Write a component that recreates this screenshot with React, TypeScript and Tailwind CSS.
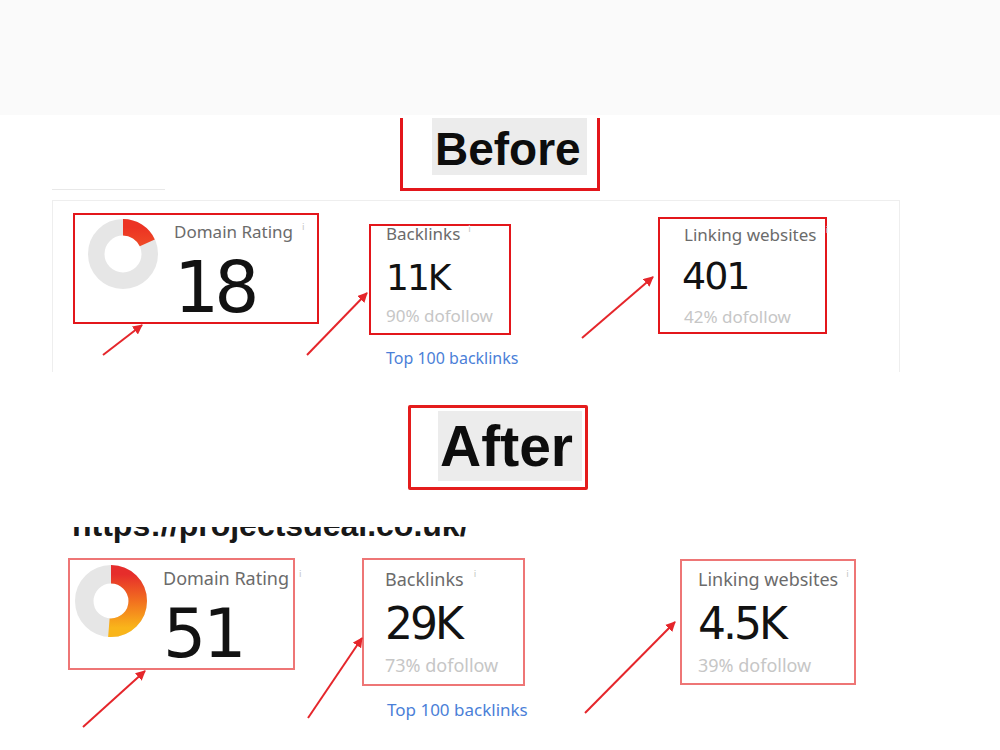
import React from "react";

type Stop = { offset: string; color: string };

interface DonutProps {
  id: string;
  pct: number;
  size: number;
  thickness: number;
  stops: Stop[];
  className?: string;
}

// Ring chart: grey track with a coloured arc starting at 12 o'clock.
// The arc is rotated -90deg, so the gradient runs along local x to read top -> bottom on screen.
const Donut: React.FC<DonutProps> = ({ id, pct, size, thickness, stops, className }) => {
  const r = (size - thickness) / 2;
  const c = 2 * Math.PI * r;
  const mid = size / 2;
  return (
    <svg width={size} height={size} viewBox={`0 0 ${size} ${size}`} className={className}>
      <defs>
        <linearGradient id={id} x1="1" y1="0" x2="0" y2="0">
          {stops.map((s) => (
            <stop key={s.offset} offset={s.offset} stopColor={s.color} />
          ))}
        </linearGradient>
      </defs>
      <circle cx={mid} cy={mid} r={r} fill="none" stroke="#e6e6e6" strokeWidth={thickness} />
      <circle
        cx={mid}
        cy={mid}
        r={r}
        fill="none"
        stroke={`url(#${id})`}
        strokeWidth={thickness}
        strokeDasharray={`${c * pct} ${c}`}
        transform={`rotate(-90 ${mid} ${mid})`}
      />
    </svg>
  );
};

const Info = ({ className = "" }: { className?: string }) => (
  <span className={`font-['DejaVu_Sans',sans-serif] text-[9px] leading-none text-[#c4c4c4] ${className}`}>
    i
  </span>
);

const arrows: [number, number, number, number][] = [
  [103, 355, 142, 325],
  [307, 355, 367, 293],
  [582, 338, 653, 277],
  [83, 727, 145, 671],
  [308, 718, 362, 638],
  [585, 713, 675, 622],
];

const label = "font-['Noto_Sans',sans-serif] leading-[20px] text-[#6b6b6b]";
const sub = "font-['Noto_Sans',sans-serif] leading-[20px] text-[#c6c6c6]";
const big = "font-['DejaVu_Sans',sans-serif] leading-none text-[#121212]";
const link = "whitespace-nowrap font-['Noto_Sans',sans-serif] text-[16px] leading-[20px] text-[#4b7fd8]";

export default function App() {
  return (
    <div className="relative h-[750px] w-[1000px] overflow-hidden bg-white">
      <div className="h-[115px] bg-[#fafafa]" />

      {/* Before heading */}
      <div className="relative h-[73px]">
        <div className="ml-[400px] h-[73px] w-[200px] border-x-[3px] border-b-[3px] border-[#e3161b] pl-[29px]">
          <div className="mt-[3px] h-[57px] w-[155px] bg-[#ececec] pl-[3px] pt-[8px]">
            <span className="block font-['Liberation_Sans',Arial,sans-serif] text-[46px] font-bold leading-none text-[#0d0d0d]">
              Before
            </span>
          </div>
        </div>
        <div className="absolute bottom-[1px] left-[52px] h-px w-[113px] bg-[#e8e8e8]" />
      </div>

      {/* Before stats */}
      <div className="ml-[52px] mt-[9px] h-[172px] w-[848px] border border-b-0 border-[#eeeeee]">
        <div className="flex items-start pl-[20px] pt-[12px]">
          <div className="flex h-[111px] w-[246px] shrink-0 items-start border-2 border-[#e3161b] pl-[13px]">
            <Donut
              id="dr-before"
              pct={0.18}
              size={70}
              thickness={16.5}
              className="mt-[4px] shrink-0"
              stops={[
                { offset: "0", color: "#ec3323" },
                { offset: "1", color: "#f4762e" },
              ]}
            />
            <div className="ml-[16px] mt-[7px]">
              <div className={`flex items-start whitespace-nowrap text-[17px] ${label}`}>
                Domain Rating
                <Info className="ml-[9px] mt-[1px]" />
              </div>
              <div className={`mt-[10px] text-[71px] tracking-[-5px] ${big}`}>18</div>
            </div>
          </div>

          <div className="ml-[50px] mt-[11px] flex w-[142px] shrink-0 flex-col">
            <div className="h-[111px] w-[142px] border-2 border-[#e3161b] pl-[15px]">
              <div className={`-mt-[2px] flex items-start text-[17px] ${label}`}>
                Backlinks
                <Info className="ml-[8px] mt-[1px]" />
              </div>
              <div className={`mt-[16px] text-[36px] tracking-[-2px] ${big}`}>11K</div>
              <div className={`mt-[10px] text-[17px] ${sub}`}>90% dofollow</div>
            </div>
            <div className={`mt-[13px] pl-[17px] ${link}`}>Top 100 backlinks</div>
          </div>

          <div className="ml-[147px] mt-[4px] h-[117px] w-[169px] shrink-0 border-2 border-[#e3161b] pl-[24px]">
            <div className={`mt-[6px] flex items-start whitespace-nowrap text-[17px] ${label}`}>
              Linking websites
              <Info className="ml-[9px] mt-[1px]" />
            </div>
            <div className={`mt-[12px] -ml-[2px] text-[38px] tracking-[-2px] ${big}`}>401</div>
            <div className={`mt-[12px] text-[17px] ${sub}`}>42% dofollow</div>
          </div>
        </div>
      </div>

      {/* After heading */}
      <div className="ml-[408px] mt-[33px] h-[85px] w-[180px] rounded-[2px] border-[3px] border-[#e41c1c] pl-[27px] pt-[3px]">
        <div className="h-[70px] w-[144px] bg-[#ececec] pl-[2px] pt-[7px]">
          <span className="block font-['Liberation_Sans',Arial,sans-serif] text-[57px] font-bold leading-none text-[#0d0d0d]">
            After
          </span>
        </div>
      </div>

      {/* site url, cut off at the top */}
      <div className="mt-[37px] h-[22px] overflow-hidden pl-[72px]">
        <div className="-mt-[18px] whitespace-nowrap font-['Liberation_Sans',Arial,sans-serif] text-[32px] font-bold leading-none text-[#181818]">
          https://projectsdeal.co.uk/
        </div>
      </div>

      {/* After stats */}
      <div className="flex items-start pl-[68px]">
        <div className="mt-[9px] flex h-[112px] w-[227px] shrink-0 items-start border-2 border-[#ee7676]">
          <Donut
            id="dr-after"
            pct={0.51}
            size={72}
            thickness={18.5}
            className="ml-[5px] mt-[5px] shrink-0"
            stops={[
              { offset: "0", color: "#e62d2b" },
              { offset: "0.5", color: "#f2701f" },
              { offset: "1", color: "#f9b51a" },
            ]}
          />
          <div className="ml-[16px] mt-[8px]">
            <div className={`flex items-start whitespace-nowrap text-[18px] ${label}`}>
              Domain Rating
              <Info className="ml-[10px] mt-[2px]" />
            </div>
            <div className={`mt-[12px] text-[68px] tracking-[-3px] ${big}`}>51</div>
          </div>
        </div>

        <div className="ml-[67px] mt-[9px] flex w-[163px] shrink-0 flex-col">
          <div className="h-[128px] w-[163px] border-2 border-[#ee7676] pl-[21px]">
            <div className={`mt-[9px] flex items-start text-[18px] ${label}`}>
              Backlinks
              <Info className="ml-[10px] mt-[1px]" />
            </div>
            <div className={`mt-[13px] text-[44px] tracking-[-3px] ${big}`}>29K</div>
            <div className={`mt-[9px] text-[18px] ${sub}`}>73% dofollow</div>
          </div>
          <div className={`mt-[14px] pl-[25px] text-[17px] ${link}`}>Top 100 backlinks</div>
        </div>

        <div className="ml-[155px] mt-[10px] h-[126px] w-[176px] shrink-0 border-2 border-[#ee7676] pl-[16px]">
          <div className={`mt-[8px] flex items-start whitespace-nowrap text-[18px] ${label}`}>
            Linking websites
            <Info className="ml-[8px] mt-[1px]" />
          </div>
          <div className={`mt-[13px] text-[44px] tracking-[-3px] ${big}`}>4.5K</div>
          <div className={`mt-[9px] text-[18px] ${sub}`}>39% dofollow</div>
        </div>
      </div>

      {/* annotation arrows */}
      <svg className="pointer-events-none absolute inset-0" width={1000} height={750} viewBox="0 0 1000 750">
        <defs>
          <marker id="head" viewBox="0 0 10 10" refX="9" refY="5" markerWidth="5" markerHeight="5" orient="auto">
            <path d="M0 0L10 5L0 10z" fill="#e5262b" />
          </marker>
        </defs>
        {arrows.map(([x1, y1, x2, y2], i) => (
          <line
            key={i}
            x1={x1}
            y1={y1}
            x2={x2}
            y2={y2}
            stroke="#e5262b"
            strokeWidth={2}
            markerEnd="url(#head)"
          />
        ))}
      </svg>
    </div>
  );
}
